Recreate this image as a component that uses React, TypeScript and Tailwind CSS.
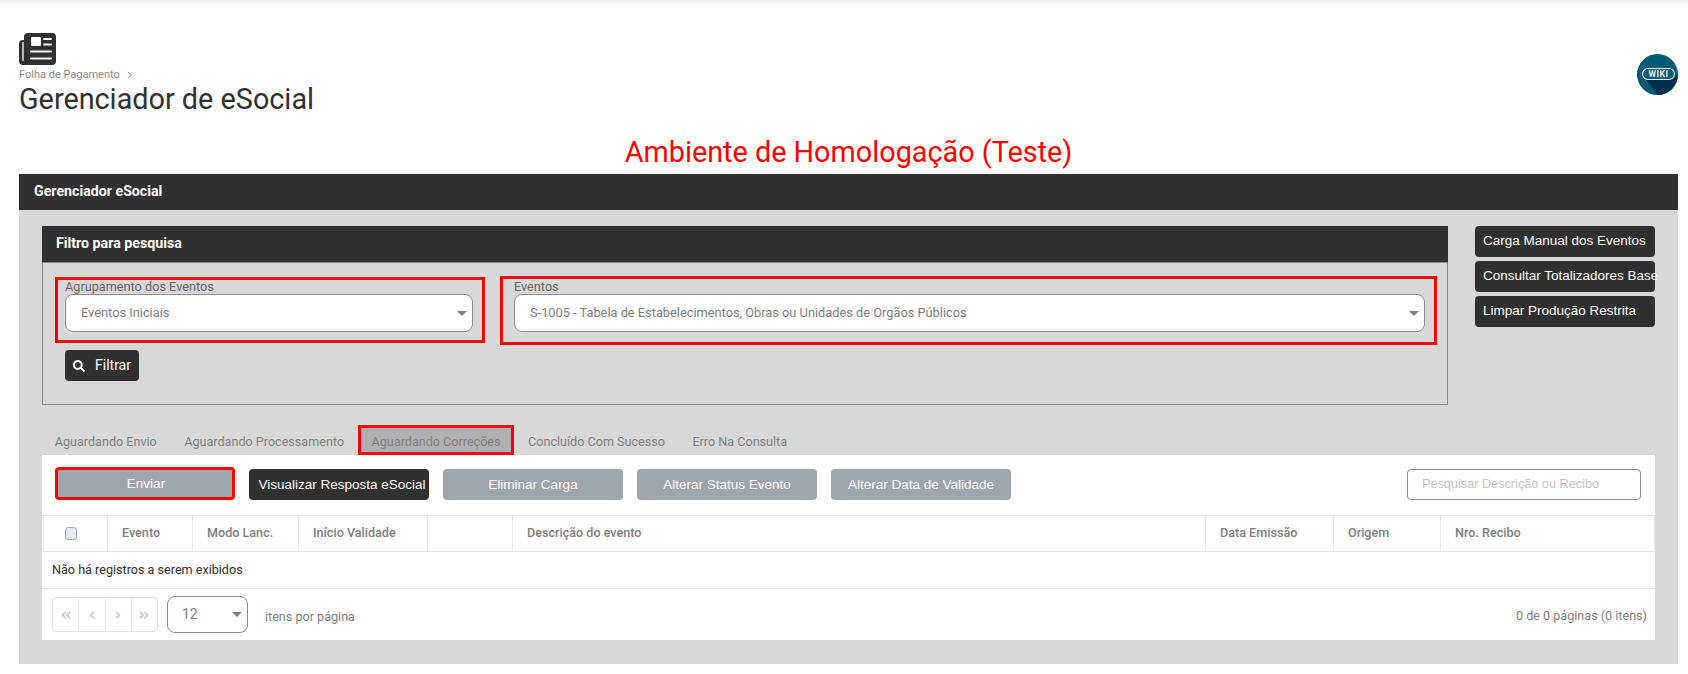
import { FaSearch, FaAngleDoubleLeft, FaAngleLeft, FaAngleRight, FaAngleDoubleRight } from 'react-icons/fa'

const tabs = ['Aguardando Envio', 'Aguardando Processamento', 'Aguardando Correções', 'Concluído Com Sucesso', 'Erro Na Consulta']
const sideButtons = ['Carga Manual dos Eventos', 'Consultar Totalizadores Base', 'Limpar Produção Restrita']
const grayButtons = ['Eliminar Carga', 'Alterar Status Evento', 'Alterar Data de Validade']
const columns = ['Evento', 'Modo Lanc.', 'Início Validade', '', 'Descrição do evento', 'Data Emissão', 'Origem', 'Nro. Recibo']

function Caret() {
  return (
    <svg width="10" height="5" viewBox="0 0 10 5" className="shrink-0">
      <path d="M0 0h10L5 5z" fill="#808080" />
    </svg>
  )
}

function Select({ value }: { value: string }) {
  return (
    <div className="flex h-[38px] items-center justify-between rounded-lg border border-[#8f8f8f] bg-white pl-[15px] pr-[5px] text-[12.8px] text-[#808080]">
      <span>{value}</span>
      <Caret />
    </div>
  )
}

function PageIcon() {
  return (
    <svg width="37" height="32" viewBox="0 0 37 32" className="block">
      <path d="M9 0h24a4 4 0 0 1 4 4v24a4 4 0 0 1-4 4H4a4 4 0 0 1-4-4V11a4 4 0 0 1 4-4h1V4a4 4 0 0 1 4-4z" fill="#303030" />
      <path d="M4 9.5v18" stroke="#fff" strokeWidth="1.3" strokeLinecap="round" />
      <rect x="12" y="4" width="10" height="9" rx="1" fill="#fff" />
      <path d="M25 6h7M25 11.5h7M12 18.5h20M12 25.5h20" stroke="#fff" strokeWidth="2" strokeLinecap="round" />
    </svg>
  )
}

function WikiLogo() {
  return (
    <svg width="41" height="41" viewBox="0 0 41 41" className="block">
      <defs>
        <clipPath id="wiki-clip">
          <circle cx="20.5" cy="20.5" r="20.5" />
        </clipPath>
      </defs>
      <circle cx="20.5" cy="20.5" r="20.5" fill="#005a73" />
      <path d="M9 26L38 20L52 32L26 48z" fill="#00304a" clipPath="url(#wiki-clip)" />
      <rect x="5.5" y="14.5" width="32" height="11" rx="5.5" fill="#005a73" stroke="#e8f0f2" strokeWidth="1.2" />
      <text x="21.5" y="23.3" textAnchor="middle" fontSize="8.6" fontWeight="700" fill="#f0f5f6" letterSpacing="0.5" fontFamily="Roboto, sans-serif">WIKI</text>
    </svg>
  )
}

export default function App() {
  return (
    <div className="h-[674px] overflow-hidden bg-white font-['Roboto',sans-serif]">
      <div className="h-[6px] bg-gradient-to-b from-[#f0f0f0] to-white" />

      <div className="flex items-start justify-between pl-[19px] pr-[10px] pt-[27px]">
        <div>
          <PageIcon />
          <div className="mt-[3px] flex h-[14px] items-center gap-[7px] text-[11px] leading-[14px] text-[#8a8a8a]">
            Folha de Pagamento
            <svg width="6" height="8" viewBox="0 0 6 8">
              <path d="M1 1l3.5 3L1 7" fill="none" stroke="#8a8a8a" strokeWidth="1" />
            </svg>
          </div>
          <h1 className="text-[28.8px] leading-[34px] text-[#303030]">Gerenciador de eSocial</h1>
        </div>
        <div className="pt-[21px]">
          <WikiLogo />
        </div>
      </div>

      <div className="ml-[19px] mr-[10px] mt-[18px] text-center text-[28.8px] leading-[36px] text-[#ff0000]">Ambiente de Homologação (Teste)</div>

      <div className="ml-[19px] mr-[10px] mt-[4px] h-[490px] bg-[#d8d8d8]">
        <div className="flex h-[36px] items-center bg-[#303030] pl-[15px] text-[14.2px] font-bold text-white">Gerenciador eSocial</div>

        <div className="flex items-start pl-[23px] pt-[16px]">
          <div className="w-[1406px]">
            <div className="flex h-[36px] items-center bg-[#303030] pl-[14px] text-[14.2px] font-bold text-white">Filtro para pesquisa</div>
            <div className="h-[143px] border border-[#888888] pl-[12px] pt-[13px]">
              <div className="flex items-start">
                <div className="mt-px w-[430px] border-[3px] border-[#ff0000] pb-[8px] pl-[7px] pr-[9px]">
                  <div className="text-[12.7px] leading-[14px] text-[#666666]">Agrupamento dos Eventos</div>
                  <Select value="Eventos Iniciais" />
                </div>
                <div className="ml-[15px] w-[937px] border-[3px] border-[#ff0000] pb-[10px] pl-[11px] pr-[9px] pt-px">
                  <div className="text-[12.7px] leading-[14px] text-[#666666]">Eventos</div>
                  <Select value="S-1005 - Tabela de Estabelecimentos, Obras ou Unidades de Orgãos Públicos" />
                </div>
              </div>
              <button className="ml-[10px] mt-[5px] flex h-[31px] w-[74px] items-center justify-center gap-[10px] rounded bg-[#303030] text-[14px] text-white">
                <FaSearch className="h-[12px] w-[12px]" />
                Filtrar
              </button>
            </div>
          </div>

          <div className="ml-[27px] flex w-[180px] flex-col gap-[4px] font-['Liberation_Sans',sans-serif]">
            {sideButtons.map((label) => (
              <div key={label} className="flex h-[31px] items-center whitespace-nowrap rounded bg-[#303030] pl-[8px] text-[13.5px] text-white">
                {label}
              </div>
            ))}
          </div>
        </div>

        <div className="ml-[22px] mt-[15px] flex h-[35px] items-end text-[12.6px] text-[#808080]">
          {tabs.map((tab, i) => (
            <div
              key={tab}
              className={
                i === 2
                  ? 'flex h-[30px] items-center whitespace-nowrap border-[3px] border-[#ff0000] bg-[#b0b0b0] px-[10.75px] pt-[4px]'
                  : 'flex h-[30px] items-center whitespace-nowrap px-[13.75px] pt-[4px]'
              }
            >
              {tab}
            </div>
          ))}
        </div>

        <div className="ml-[23px] mr-[23px] h-[185px] bg-white">
          <div className="flex h-[60px] items-end pb-[15px] pl-[13px] pr-[14px] font-['Liberation_Sans',sans-serif] text-[13.5px]">
            <div className="flex items-end gap-[14px]">
              <button className="flex h-[33px] w-[180px] items-center justify-center rounded border-[3px] border-[#ff0000] bg-[#a0a4ab] pt-[2px] pl-[2px] text-white">Enviar</button>
              <button className="flex h-[31px] w-[180px] items-center justify-center whitespace-nowrap rounded bg-[#303030] pl-[6px] pt-px text-white">Visualizar Resposta eSocial</button>
              {grayButtons.map((label) => (
                <button key={label} className="flex h-[31px] w-[180px] items-center justify-center whitespace-nowrap rounded bg-[#a0a4ab] pt-px text-white">
                  {label}
                </button>
              ))}
            </div>
            <div className="ml-auto flex h-[31px] w-[234px] items-center rounded border border-[#8f8f8f] pl-[14px] text-[12.7px] text-[#c4c4c4]">Pesquisar Descrição ou Recibo</div>
          </div>

          <div className="ml-px grid h-[37px] grid-cols-[63px_85px_106px_129px_85px_693px_128px_107px_1fr] border border-[#e2e5ea] text-[12.6px] font-medium text-[#808080]">
            <div className="flex items-center pl-[21px]">
              <div className="h-[13px] w-[12px] rounded-[3px] border border-[#a8acb4] bg-[#e9ecef]" />
            </div>
            {columns.map((col, i) => (
              <div key={i} className="flex items-center border-l border-[#e2e5ea] pl-[14px]">
                {col}
              </div>
            ))}
          </div>

          <div className="flex h-[37px] items-center border-b border-[#e2e5ea] pl-[10px] text-[12.6px] text-[#303030]">Não há registros a serem exibidos</div>

          <div className="flex h-[51px] items-center pl-[10px] pr-[8px] text-[12.6px] text-[#808080]">
            <div className="flex h-[35px] w-[106px] rounded border border-[#e0e0e0] text-[#cfcfcf]">
              <div className="flex flex-1 items-center justify-center"><FaAngleDoubleLeft className="h-[12px] w-[12px]" /></div>
              <div className="flex flex-1 items-center justify-center border-l border-[#e8e8e8]"><FaAngleLeft className="h-[12px] w-[12px]" /></div>
              <div className="flex flex-1 items-center justify-center border-l border-[#e8e8e8]"><FaAngleRight className="h-[12px] w-[12px]" /></div>
              <div className="flex flex-1 items-center justify-center border-l border-[#e8e8e8]"><FaAngleDoubleRight className="h-[12px] w-[12px]" /></div>
            </div>
            <div className="ml-[9px] flex h-[37px] w-[81px] items-center justify-between rounded-lg border border-[#8f8f8f] pl-[14px] pr-[5px] text-[14px]">
              12
              <Caret />
            </div>
            <span className="ml-[17px] mt-[6px]">itens por página</span>
            <span className="ml-auto mt-[4px]">0 de 0 páginas (0 itens)</span>
          </div>
        </div>
      </div>
    </div>
  )
}
